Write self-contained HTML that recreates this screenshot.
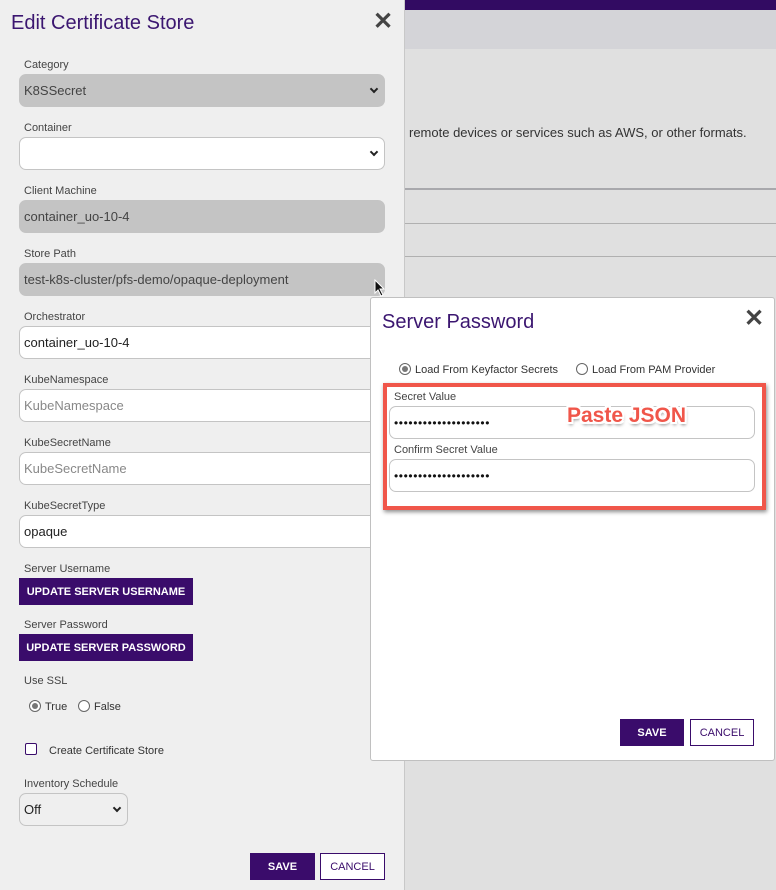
<!DOCTYPE html>
<html><head><meta charset="utf-8"><style>
*{box-sizing:border-box;margin:0;padding:0}
body{width:776px;height:890px;overflow:hidden;position:relative;background:#e0e0e0;font-family:"Liberation Sans",sans-serif;color:#333}
.a{position:absolute}
.lbl{position:absolute;left:24px;font-size:11px;color:#444;margin-top:1px}
.inp{position:absolute;left:19px;width:366px;height:33px;border:1px solid #c4c4c4;border-radius:7px;background:#fff;font-size:13px;padding:0 0 0 4px;line-height:32px;color:#222}
.gray{background:#c4c4c4;color:#444}
.ph{color:#888}
.chev{position:absolute;right:7px;top:11px;width:6px;height:6px;border-right:2px solid #222;border-bottom:2px solid #222;transform:rotate(45deg)}
.btn{position:absolute;background:#3a0c6b;color:#fff;font-size:11px;font-weight:bold;text-align:center;line-height:28px;height:27px}
.cbtn{position:absolute;border:1px solid #3a0c6b;background:#fff;color:#3a0c6b;font-size:11px;text-align:center;line-height:26px;height:27px}
.radio{position:absolute;width:12px;height:12px;border:1px solid #666;border-radius:50%;background:#fff}
.radio.on::after{content:"";position:absolute;left:2px;top:2px;width:6px;height:6px;border-radius:50%;background:#777}
.x{position:absolute;font-size:24px;font-weight:bold;color:#444;line-height:1}
.dots{font-size:12px;letter-spacing:0.6px;color:#111}
</style></head><body>
<div class="a" style="left:404px;top:0;width:372px;height:10px;background:#320b62"></div>
<div class="a" style="left:404px;top:10px;width:372px;height:39px;background:#d4d4d8"></div>
<div class="a" style="left:409px;top:125px;font-size:13px;color:#333">remote devices or services such as AWS, or other formats.</div>
<div class="a" style="left:404px;top:188px;width:372px;height:2px;background:#a8a8ac"></div>
<div class="a" style="left:404px;top:223px;width:372px;height:1px;background:#b0b0b0"></div>
<div class="a" style="left:404px;top:256px;width:372px;height:1px;background:#b0b0b0"></div>
<div class="a" style="left:0;top:0;width:405px;height:890px;background:#efefef;border-right:1px solid #c8c8c8"></div>
<div class="a" style="left:11px;top:12px;font-size:20px;color:#3b1670">Edit Certificate Store</div>
<div class="x" style="left:373px;top:10px">✕</div>
<div class="lbl" style="top:58px">Category</div>
<div class="inp gray" style="top:74px">K8SSecret<span class="chev"></span></div>
<div class="lbl" style="top:121px">Container</div>
<div class="inp" style="top:137px"><span class="chev"></span></div>
<div class="lbl" style="top:184px">Client Machine</div>
<div class="inp gray" style="top:200px">container_uo-10-4</div>
<div class="lbl" style="top:247px">Store Path</div>
<div class="inp gray" style="top:263px">test-k8s-cluster/pfs-demo/opaque-deployment</div>
<div class="lbl" style="top:310px">Orchestrator</div>
<div class="inp" style="top:326px">container_uo-10-4</div>
<div class="lbl" style="top:373px">KubeNamespace</div>
<div class="inp ph" style="top:389px">KubeNamespace</div>
<div class="lbl" style="top:436px">KubeSecretName</div>
<div class="inp ph" style="top:452px">KubeSecretName</div>
<div class="lbl" style="top:499px">KubeSecretType</div>
<div class="inp" style="top:515px">opaque</div>
<div class="lbl" style="top:562px">Server Username</div>
<div class="btn" style="left:19px;top:578px;width:174px">UPDATE SERVER USERNAME</div>
<div class="lbl" style="top:618px">Server Password</div>
<div class="btn" style="left:19px;top:634px;width:174px">UPDATE SERVER PASSWORD</div>
<div class="lbl" style="top:674px">Use SSL</div>
<div class="radio on" style="left:29px;top:700px"></div>
<div class="a" style="left:45px;top:701px;font-size:11px">True</div>
<div class="radio" style="left:78px;top:700px"></div>
<div class="a" style="left:94px;top:701px;font-size:11px">False</div>
<div class="a" style="left:25px;top:743px;width:12px;height:12px;border:1.5px solid #3a0c6b;border-radius:2px;background:#fff"></div>
<div class="a" style="left:49px;top:745px;font-size:11px">Create Certificate Store</div>
<div class="lbl" style="top:777px">Inventory Schedule</div>
<div class="inp" style="top:793px;width:109px;background:#efefef">Off<span class="chev"></span></div>
<div class="btn" style="left:250px;top:853px;width:65px">SAVE</div>
<div class="cbtn" style="left:320px;top:853px;width:65px">CANCEL</div>
<div class="a" style="left:370px;top:297px;width:405px;height:464px;background:#fff;border:1px solid #c0c0c0;border-radius:3px"></div>
<div class="a" style="left:382px;top:311px;font-size:20px;color:#3b1670">Server Password</div>
<div class="x" style="left:744px;top:307px">✕</div>
<div class="radio on" style="left:399px;top:363px"></div>
<div class="a" style="left:415px;top:364px;font-size:11px">Load From Keyfactor Secrets</div>
<div class="radio" style="left:576px;top:363px"></div>
<div class="a" style="left:592px;top:364px;font-size:11px">Load From PAM Provider</div>
<div class="a" style="left:383px;top:383px;width:383px;height:127px;border:4px solid #f0564a;box-shadow:1px 2px 4px rgba(0,0,0,.45)"></div>
<div class="a" style="left:394px;top:391px;font-size:11px;color:#444">Secret Value</div>
<div class="inp dots" style="left:389px;top:406px;width:366px">••••••••••••••••••••</div>
<div class="a" style="left:394px;top:444px;font-size:11px;color:#444">Confirm Secret Value</div>
<div class="inp dots" style="left:389px;top:459px;width:366px">••••••••••••••••••••</div>
<div class="a" style="left:567px;top:404px;font-size:21px;font-weight:bold;color:#f0564a;text-shadow:-2px -2px 0 #fff,2px -2px 0 #fff,-2px 2px 0 #fff,2px 2px 0 #fff,0 2px 0 #fff,2px 0 0 #fff,-2px 0 0 #fff,0 -2px 0 #fff,1px 3px 3px rgba(0,0,0,.5)">Paste JSON</div>
<div class="btn" style="left:620px;top:719px;width:64px">SAVE</div>
<div class="cbtn" style="left:690px;top:719px;width:64px">CANCEL</div>
<svg class="a" style="left:374px;top:279px" width="12" height="18" viewBox="0 0 12 18"><path d="M1 1 L1 14 L4 11 L7 17 L9 16 L6 10 L10 10 Z" fill="#111" stroke="#fff" stroke-width="1"/></svg>
</body></html>
